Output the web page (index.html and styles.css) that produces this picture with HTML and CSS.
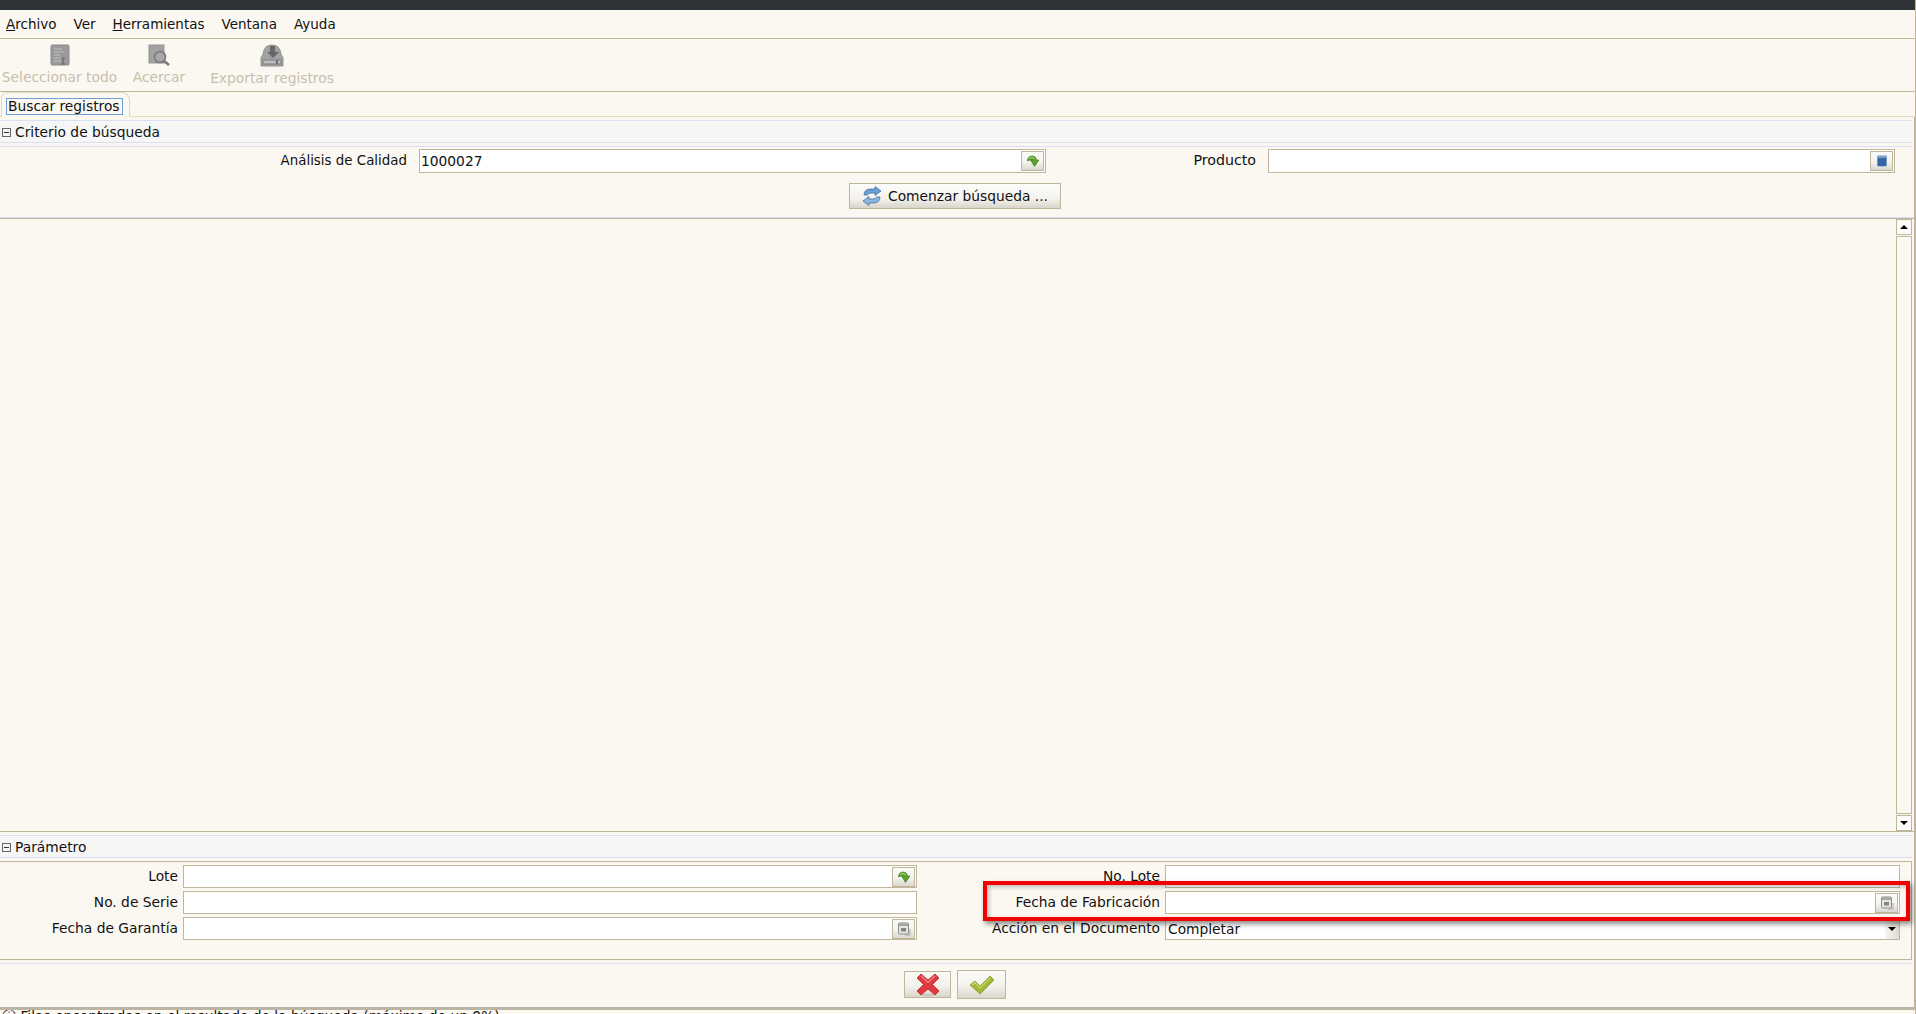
FILE: index.html
```html
<!DOCTYPE html>
<html lang="es">
<head>
    <meta charset="UTF-8">
    <title>Buscar registros</title>
    <link rel="stylesheet" href="styles.css">
</head>
<body>
    <svg class="defs" width="0" height="0">
        <defs>
            <symbol id="ico-arrow" viewBox="0 0 14 14">
                <path d="M1.500 7 Q1.500 2 6.500 2 Q10 2 10.500 6 L13 6 L8.500 12.500 L4.500 6 L7 6 Q6.500 5 5.500 5.500 Q3.500 6 1.500 7Z" fill="#5aa02c" stroke="#2f7a18" stroke-width=".6"/>
                <path d="M3 4.500 Q6 2.500 9 4.500" fill="none" stroke="#b8e08a" stroke-width="1"/>
            </symbol>
            <symbol id="ico-box" viewBox="0 0 12 12">
                <rect x="2" y="1.500" width="8" height="9" rx="1" fill="#3566a8"/>
                <rect x="2" y="1.500" width="8" height="2" fill="#7f9fca"/>
            </symbol>
            <symbol id="ico-cal" viewBox="0 0 14 14">
                <rect x="1.500" y="1" width="10" height="11" rx="1" fill="#e4e4e0" stroke="#8e8e8a"/>
                <rect x="2" y="1.500" width="9" height="2.500" fill="#a6a6a2"/>
                <rect x="4" y="6" width="5" height="3.500" fill="#85857d"/>
                <path d="M13 7 V13 H8" fill="none" stroke="#a8a8a2"/>
            </symbol>
        </defs>
    </svg>

    <div class="topbar"></div>

    <nav class="menubar">
        <span><u>A</u>rchivo</span>
        <span>Ver</span>
        <span><u>H</u>erramientas</span>
        <span>Ventana</span>
        <span>Ayuda</span>
    </nav>

    <div class="toolbar">
        <div class="tool tool-select">
            <svg width="20" height="22" viewBox="0 0 20 22">
                <rect x="1" y="1" width="18" height="20" rx="1" fill="#9a9a9a" stroke="#8a8a8a"/>
                <path d="M4 5h8M4 8h10M4 11h6M4 14h9M4 17h7" stroke="#b4b4b4" stroke-width="1.500"/>
                <path d="M11 14h4M13 14v6M11 20h4" stroke="#5e5e5e"/>
            </svg>
            <span>Seleccionar todo</span>
        </div>
        <div class="tool tool-zoom">
            <svg width="22" height="22" viewBox="0 0 22 22">
                <rect x="1" y="1" width="15" height="18" fill="#a2a2a2" stroke="#949494"/>
                <circle cx="12" cy="13" r="5.500" fill="#a8a8a8" stroke="#777" stroke-width="1.600"/>
                <path d="M16 17 L21 21" stroke="#777" stroke-width="2.600"/>
            </svg>
            <span>Acercar</span>
        </div>
        <div class="tool tool-export">
            <svg width="24" height="23" viewBox="0 0 24 23">
                <path d="M3 10 Q4 1 12 1 Q20 1 21 10 L23 14 V22 H1 V14Z" fill="#a2a2a2" stroke="#929292"/>
                <path d="M10 2 H15 V8 H19 L13 14 L7 8 H10Z" fill="#666"/>
                <rect x="3" y="16" width="18" height="4" fill="#bdbdbd" stroke="#7c7c7c"/>
                <rect x="16" y="16" width="2" height="4" fill="#707070"/>
            </svg>
            <span>Exportar registros</span>
        </div>
    </div>

    <div class="tabstrip">
        <div class="tab"><span class="tab-label">Buscar registros</span></div>
    </div>

    <main class="panel">
        <div class="section-head"><span class="collapse"></span>Criterio de búsqueda</div>

        <div class="search-row">
            <label class="lbl lbl-search">Análisis de Calidad</label>
            <div class="field field-search">
                <span class="value">1000027</span>
                <button class="mini"><svg width="14" height="14"><use href="#ico-arrow"/></svg></button>
            </div>
            <label class="lbl lbl-product">Producto</label>
            <div class="field field-product">
                <span class="value"></span>
                <button class="mini"><svg width="14" height="14"><use href="#ico-box"/></svg></button>
            </div>
        </div>

        <div class="start-row">
            <button class="start">
                <svg width="20" height="20" viewBox="0 0 20 20">
                    <path d="M2 9 Q2 3 9 3 H13 V0.500 L19 5 L13 9.500 V7 H9 Q6 7 5.500 9Z" fill="#6f9fd2" stroke="#3d6ea8" stroke-width=".8"/>
                    <path d="M18 11 Q18 17 11 17 H7 V19.500 L1 15 L7 10.500 V13 H11 Q14 13 14.500 11Z" fill="#8fb6de" stroke="#3d6ea8" stroke-width=".8"/>
                </svg>
                Comenzar búsqueda ...
            </button>
        </div>

        <div class="results">
            <div class="results-body"></div>
            <div class="scrollbar">
                <div class="scroll-btn"><span class="arrow-up"></span></div>
                <div class="scroll-thumb"></div>
                <div class="scroll-btn"><span class="arrow-down"></span></div>
            </div>
        </div>

        <div class="section-head section-params"><span class="collapse"></span>Parámetro</div>

        <div class="params">
            <label class="lbl">Lote</label>
            <div class="field">
                <span class="value"></span>
                <button class="mini"><svg width="14" height="14"><use href="#ico-arrow"/></svg></button>
            </div>
            <label class="lbl">No. Lote</label>
            <div class="field"><span class="value"></span></div>

            <label class="lbl">No. de Serie</label>
            <div class="field"><span class="value"></span></div>
            <label class="lbl">Fecha de Fabricación</label>
            <div class="field">
                <span class="value"></span>
                <button class="mini"><svg width="14" height="14"><use href="#ico-cal"/></svg></button>
            </div>

            <label class="lbl">Fecha de Garantía</label>
            <div class="field">
                <span class="value"></span>
                <button class="mini"><svg width="14" height="14"><use href="#ico-cal"/></svg></button>
            </div>
            <label class="lbl">Acción en el Documento</label>
            <div class="field field-select">
                <span class="value">Completar</span>
                <span class="drop"><span class="arrow-down"></span></span>
            </div>
        </div>

        <div class="actions">
            <button class="act act-cancel">
                <svg width="24" height="24" viewBox="0 0 24 24">
                    <ellipse cx="12" cy="22" rx="7" ry="1.500" fill="#c8c8c4"/>
                    <path d="M5 1 L12 7 L19 1 L23 5 L16.500 11.500 L23 18 L19 22 L12 16 L5 22 L1 18 L7.500 11.500 L1 5Z" fill="#dd3b40" stroke="#b5252c" stroke-width=".8"/>
                    <path d="M5 3 L12 9.500 L19 3" fill="none" stroke="#f08a8c" stroke-width="1.200"/>
                </svg>
            </button>
            <button class="act act-ok">
                <svg width="26" height="20" viewBox="0 0 26 20">
                    <path d="M1 10 L6 6 L11 11 L21 1 L25 5 L11 19Z" fill="#a4b838" stroke="#84962a" stroke-width=".8"/>
                    <path d="M3 10 L6 7.500 L11 13 L21 3" fill="none" stroke="#cbd86e" stroke-width="1.200"/>
                </svg>
            </button>
        </div>
    </main>

    <footer class="status">ⓘ Filas encontradas en el resultado de la búsqueda (máximo de un 0%)</footer>

    <div class="highlight"></div>
</body>
</html>
```

FILE: styles.css
```css
* {
    margin: 0;
    padding: 0;
    box-sizing: border-box;
}

html, body {
    height: 1014px;
    overflow: hidden;
}

body {
    position: relative;
    display: flex;
    flex-direction: column;
    background: #fbf8f1;
    color: #111;
    font-family: "DejaVu Sans", sans-serif;
    font-size: 13.8px;
    border-right: 1px solid #bfb69c;
}

.defs {
    position: absolute;
}

.topbar {
    height: 10px;
    flex: none;
    background: #2f3439;
}

.menubar {
    height: 29px;
    flex: none;
    display: flex;
    align-items: center;
    gap: 17px;
    padding-left: 6px;
    font-size: 13.5px;
    border-bottom: 1px solid #bfb69c;
    padding-bottom: 1px;
}

.toolbar {
    height: 53px;
    flex: none;
    display: flex;
    border-bottom: 1px solid #bfb69c;
    color: #c6bfad;
}

.tool {
    display: flex;
    flex-direction: column;
    align-items: center;
    padding-top: 5px;
    gap: 3px;
    white-space: nowrap;
}

.tool-select {
    width: 119px;
}

.tool-zoom {
    width: 80px;
}

.tool-export {
    margin-left: 12px;
    width: 122px;
}

.tabstrip {
    height: 25px;
    flex: none;
    padding-left: 1px;
    border-bottom: 1px solid #e6dcc0;
}

.tab {
    width: 129px;
    height: 25px;
    padding: 5px 0 0 4px;
    border: 1px solid #e0d8bf;
    border-bottom: 0;
    border-radius: 6px 8px 0 0;
    background: #fbf8f1;
}

.tab-label {
    display: block;
    width: 117px;
    height: 17px;
    line-height: 14px;
    padding-left: 1px;
    border: 1px solid #6f9fd4;
    white-space: nowrap;
    overflow: hidden;
}

.panel {
    flex: 1;
    min-height: 0;
    display: flex;
    flex-direction: column;
    padding-top: 3px;
    border-right: 1px solid #bfb69c;
}

.section-head {
    height: 27px;
    flex: none;
    display: flex;
    align-items: center;
    gap: 4px;
    margin-right: 2px;
    padding: 0 0 3px 2px;
    background: linear-gradient(#f6f6f6, #f6f6f6) 0 1px / 100% 22px no-repeat;
    border-top: 1px solid #d8def4;
    border-bottom: 1px solid #d8def4;
    box-shadow: inset 0 -3px 0 #fbf8f1, inset 0 -4px 0 #d8def4;
}

.collapse {
    position: relative;
    width: 9px;
    height: 9px;
    flex: none;
    border: 1px solid #666;
    background: #f6f6f6;
}

.collapse::after {
    content: "";
    position: absolute;
    left: 1px;
    right: 1px;
    top: 3px;
    height: 1px;
    background: #333;
}

.lbl {
    text-align: right;
    white-space: nowrap;
}

.field {
    height: 24px;
    display: flex;
    align-items: center;
    background: #fff;
    border: 1px solid #bfb69c;
    padding: 0 1px;
}

.value {
    flex: 1;
    white-space: nowrap;
}

.mini {
    width: 23px;
    height: 20px;
    display: flex;
    align-items: center;
    justify-content: center;
    flex: none;
    border: 1px solid #bfb69c;
    background: linear-gradient(#fafaf6, #f4f3ee 55%, #d9d7cf);
}

.search-row {
    height: 24px;
    flex: none;
    margin-top: 2px;
    display: grid;
    grid-template-columns: 407px 628px 210px 628px;
    align-items: center;
}

.lbl-search {
    padding-bottom: 2px;
    font-size: 13.4px;
}

.field-search {
    margin-left: 12px;
    width: 627px;
}

.lbl-product {
    grid-column: 3;
    padding-bottom: 2px;
    font-size: 14.2px;
    transform: translateX(11px);
}

.field-product {
    margin-left: 23px;
    width: 627px;
}

.start-row {
    flex: none;
    display: flex;
    padding: 10px 0 0 849px;
}

.start {
    width: 212px;
    height: 26px;
    display: flex;
    align-items: center;
    justify-content: center;
    gap: 6px;
    border: 1px solid #bfb69c;
    background: linear-gradient(#fcfcfa, #f4f3ee 60%, #d8d5cb);
    color: #111;
    font: 13.8px "DejaVu Sans", sans-serif;
}

.results {
    height: 614px;
    flex: none;
    margin-top: 9px;
    display: flex;
    border-top: 1px solid #bfb69c;
    box-shadow: 0 -1px 0 #d8def4;
    padding-right: 2px;
    border-bottom: 1px solid #bfb69c;
}

.results-body {
    flex: 1;
}

.scrollbar {
    width: 16px;
    display: flex;
    flex-direction: column;
    gap: 1px;
}

.scroll-btn {
    height: 16px;
    flex: none;
    display: flex;
    align-items: center;
    justify-content: center;
    background: #fdfcf8;
    border: 1px solid #bfb69c;
}

.scroll-thumb {
    flex: 1;
    background: #fbf8f1;
    border: 1px solid #bfb69c;
}

.arrow-up {
    width: 0;
    height: 0;
    border: 4px solid transparent;
    border-top: 0;
    border-bottom: 4px solid #000;
}

.arrow-down {
    width: 0;
    height: 0;
    border: 4px solid transparent;
    border-bottom: 0;
    border-top: 4px solid #000;
}

.section-params {
    margin-top: 3px;
}

.params {
    height: 99px;
    flex: none;
    margin-right: 2px;
    padding-top: 3px;
    display: grid;
    grid-template-columns: 178px 739px 243px 740px;
    grid-auto-rows: 23px;
    row-gap: 3px;
    border: 1px solid #bfb69c;
    border-left: 0;
    margin-top: -1px;
    align-items: center;
}

.params .lbl {
    padding-bottom: 1px;
}

.params .field {
    height: 23px;
    margin-left: 5px;
}

.field-select {
    padding-right: 0;
}

.field-select .value {
    padding-left: 1px;
}

.drop {
    width: 14px;
    height: 21px;
    display: flex;
    align-items: center;
    justify-content: center;
    background: linear-gradient(90deg, #f7f6f1, #dcdad2);
}

.actions {
    flex: 1;
    display: flex;
    align-items: flex-start;
    gap: 6px;
    padding: 6px 0 0 904px;
    border-top: 1px solid #d8def4;
    margin: 3px 2px 0 0;
}

.act {
    display: flex;
    align-items: center;
    justify-content: center;
    border: 1px solid #bfb69c;
    background: linear-gradient(#fbfbf8, #f3f2ec 55%, #d9d6cc);
}

.act-cancel {
    width: 47px;
    height: 27px;
    margin-top: 1px;
}

.act-ok {
    width: 49px;
    height: 29px;
}

.status {
    height: 7px;
    flex: none;
    overflow: hidden;
    padding-left: 2px;
    line-height: 13px;
    white-space: nowrap;
    border-top: 3px solid #bdb5a3;
}

.highlight {
    position: absolute;
    left: 983px;
    top: 881px;
    width: 927px;
    height: 40px;
    border: 4px solid #f00000;
    box-shadow: 2px 3px 5px rgba(0, 0, 0, .45), inset 2px 2px 4px rgba(0, 0, 0, .25);
    pointer-events: none;
}
```
